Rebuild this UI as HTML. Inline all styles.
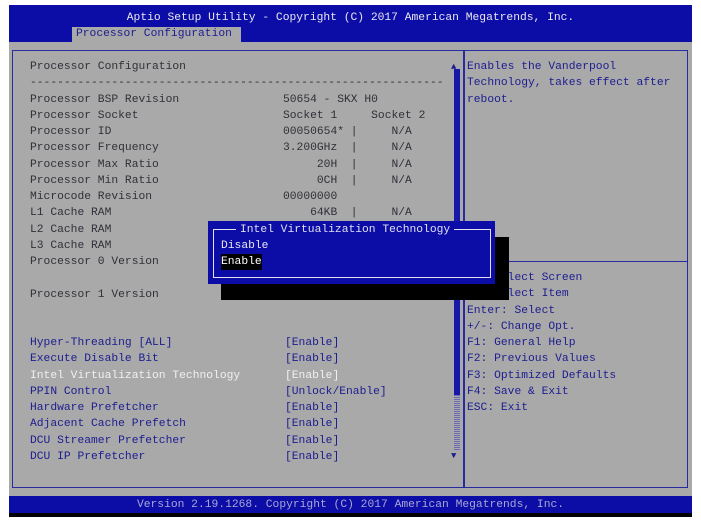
<!DOCTYPE html><html><head><style>
body{margin:0;width:701px;height:526px;background:#fff;position:relative;overflow:hidden;font-family:"Liberation Mono","DejaVu Sans Mono",monospace;font-size:11.3px}
.a{position:absolute}
.t{position:absolute;white-space:pre;line-height:16.25px}
.g{color:#303038}.b{color:#1c1c90}.w{color:#f0f0f0}
</style></head><body>
<div class="a" style="left:9px;top:5px;width:683px;height:37px;background:#0c0ca6"></div>
<div class="t" style="left:9px;top:10px;width:683px;text-align:center;color:#e8e8f0">Aptio Setup Utility - Copyright (C) 2017 American Megatrends, Inc.</div>
<div class="a" style="left:72px;top:27px;width:169px;height:15px;background:#a9a9a9"></div>
<div class="t b" style="left:76px;top:26px">Processor Configuration</div>
<div class="a" style="left:9px;top:42px;width:683px;height:454px;background:#a9a9a9"></div>
<div class="a" style="left:12px;top:50px;width:674px;height:436px;border:1.5px solid #2a2aa0"></div>
<div class="a" style="left:463px;top:50px;width:1.5px;height:437px;background:#2a2aa0"></div>
<div class="a" style="left:464px;top:261px;width:224px;height:1px;background:#2a2aa0"></div>
<div class="a" style="left:454px;top:69px;width:6px;height:326px;background:#1818a8"></div>
<div class="a" style="left:454px;top:395px;width:6px;height:55px;background:repeating-linear-gradient(#6a6ab0 0 1px,#a9a9a9 1px 2px)"></div>
<div class="t b" style="left:451px;top:59px;font-size:9px">▲</div>
<div class="t b" style="left:451px;top:448px;font-size:9px">▼</div>
<div class="a" style="left:9px;top:496px;width:683px;height:17px;background:#0c0ca6"></div>
<div class="a" style="left:9px;top:513px;width:683px;height:4px;background:#000"></div>
<div class="t" style="left:9px;top:497px;width:683px;text-align:center;color:#a8a8d8">Version 2.19.1268. Copyright (C) 2017 American Megatrends, Inc.</div>

<div class="t g" style="left:30px;top:59px">Processor Configuration
-------------------------------------------------------------
Processor BSP Revision
Processor Socket
Processor ID
Processor Frequency
Processor Max Ratio
Processor Min Ratio
Microcode Revision
L1 Cache RAM
L2 Cache RAM
L3 Cache RAM
Processor 0 Version

Processor 1 Version</div>
<div class="t g" style="left:283px;top:91.5px">50654 - SKX H0
Socket 1     Socket 2
00050654* |     N/A
3.200GHz  |     N/A
     20H  |     N/A
     0CH  |     N/A
00000000
    64KB  |     N/A</div>
<div class="t b" style="left:30px;top:335px">Hyper-Threading [ALL]
Execute Disable Bit
<span class="w">Intel Virtualization Technology</span>
PPIN Control
Hardware Prefetcher
Adjacent Cache Prefetch
DCU Streamer Prefetcher
DCU IP Prefetcher</div>
<div class="t b" style="left:285px;top:335px">[Enable]
[Enable]
<span class="w">[Enable]</span>
[Unlock/Enable]
[Enable]
[Enable]
[Enable]
[Enable]</div>
<div class="t b" style="left:467px;top:59px">Enables the Vanderpool
Technology, takes effect after
reboot.</div>
<div class="t b" style="left:467px;top:270px">→←: Select Screen
↑↓: Select Item
Enter: Select
+/-: Change Opt.
F1: General Help
F2: Previous Values
F3: Optimized Defaults
F4: Save &amp; Exit
ESC: Exit</div>

<div class="a" style="left:221px;top:237px;width:288px;height:63px;background:#000"></div>
<div class="a" style="left:208px;top:221px;width:287px;height:63px;background:#0c0ca6"></div>
<div class="a" style="left:213px;top:229px;width:276px;height:47px;border:1px solid #e0e0f0"></div>
<div class="t" style="left:236px;top:222px;color:#e0e0f0;background:#0c0ca6;padding:0 4px">Intel Virtualization Technology</div>
<div class="t" style="left:221px;top:238px;color:#e8e8f0">Disable</div>
<div class="t" style="left:221px;top:254px;color:#fff;background:#000">Enable</div>
</body></html>
